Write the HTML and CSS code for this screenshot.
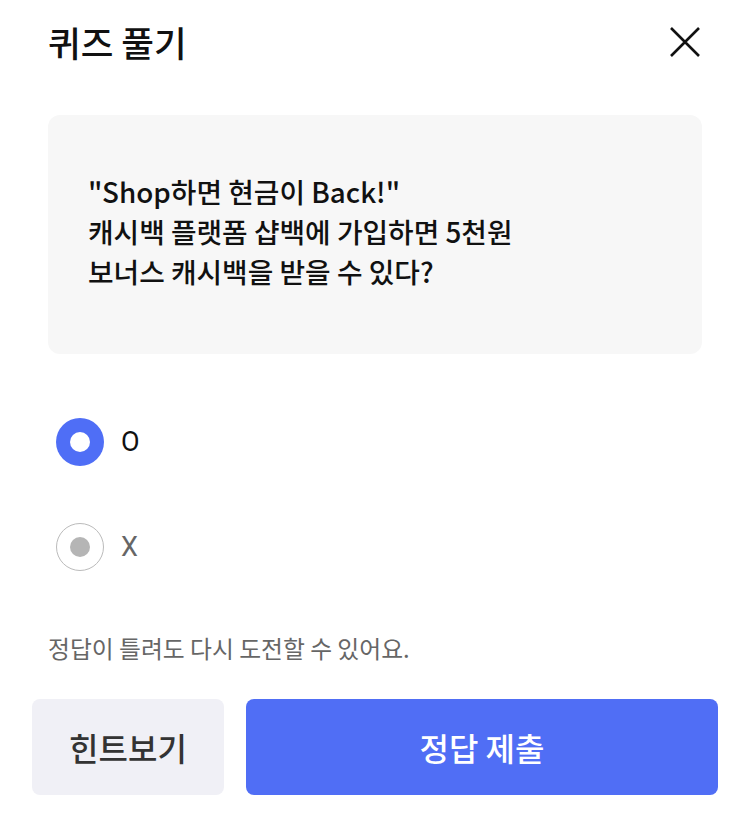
FILE: index.html
```html
<!DOCTYPE html>
<html>
<head>
    <meta charset="utf-8">
    <link rel="stylesheet" href="styles.css">
</head>
<body>
    <div class="header">
        <h1 class="title">퀴즈 풀기</h1>
        <span class="close">
            <svg width="32" height="32" viewBox="0 0 32 32">
                <path d="M2 2 L30 30 M30 2 L2 30" stroke="#111" stroke-width="2.6" fill="none"/>
            </svg>
        </span>
    </div>

    <div class="question">
        <p>"Shop하면 현금이 Back!"<br>
        캐시백 플랫폼 샵백에 가입하면 5천원<br>
        보너스 캐시백을 받을 수 있다?</p>
    </div>

    <div class="options">
        <label class="option selected">
            <span class="radio"></span>
            <span class="label">O</span>
        </label>
        <label class="option">
            <span class="radio"></span>
            <span class="label">X</span>
        </label>
    </div>

    <p class="notice">정답이 틀려도 다시 도전할 수 있어요.</p>

    <div class="buttons">
        <button class="hint">힌트보기</button>
        <button class="submit">정답 제출</button>
    </div>
</body>
</html>
```

FILE: styles.css
```css
body {
    margin: 0;
    width: 731px;
    font-family: "Noto Sans CJK KR", "Noto Sans", sans-serif;
    background: #fff;
    color: #111;
}
.header {
    display: flex;
    justify-content: space-between;
    align-items: center;
    padding: 20px 30px 0 48px;
    height: 44px;
}
.title {
    margin: 0;
    font-size: 35.5px;
    font-weight: 500;
    line-height: 44px;
}
.close {
    display: flex;
    width: 32px;
    height: 32px;
}
.question {
    margin: 51px 29px 0 48px;
    background-color: #f7f7f7;
    border-radius: 12px;
    height: 239px;
    display: flex;
    align-items: center;
    padding: 0 40px 8px;
    box-sizing: border-box;
}
.question p {
    margin: 0;
    font-size: 27.8px;
    font-weight: 500;
    line-height: 40px;
    color: #111;
}
.options {
    margin: 64px 0 0 56px;
    display: flex;
    flex-direction: column;
    gap: 57px;
}
.option {
    display: flex;
    align-items: center;
    gap: 17px;
    height: 48px;
}
.radio {
    width: 48px;
    height: 48px;
    border-radius: 50%;
    box-sizing: border-box;
    border: 1.5px solid #bbb;
    display: flex;
    align-items: center;
    justify-content: center;
}
.radio::after {
    content: "";
    width: 20px;
    height: 20px;
    border-radius: 50%;
    background: #b5b5b5;
}
.option.selected .radio {
    border: none;
    background: #4f6ef6;
}
.option.selected .radio::after {
    background: #fff;
}
.label {
    font-size: 27px;
    color: #666;
    font-family: "Roboto", "Noto Sans", sans-serif;
}
.option.selected .label {
    color: #111;
}
.notice {
    margin: 62px 0 0 48px;
    font-size: 23.8px;
    color: #666;
    line-height: 30px;
}
.buttons {
    display: flex;
    gap: 22px;
    margin: 36px 13px 0 32px;
}
.buttons button {
    height: 96px;
    border: none;
    border-radius: 8px;
    font-family: "Noto Sans CJK KR", sans-serif;
    font-size: 32px;
    font-weight: 500;
}
.hint {
    width: 192px;
    background: #f0f0f6;
    color: #333;
}
.submit {
    flex: 1;
    background: #506ef5;
    color: #fff;
}
```
